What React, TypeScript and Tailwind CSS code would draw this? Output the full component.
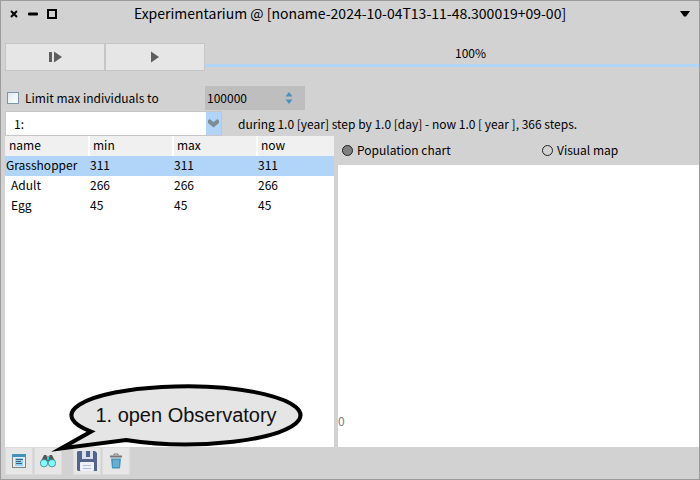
import { useState, type ReactNode } from "react";

const rows = [
  { name: "Grasshopper", min: 311, max: 311, now: 311, child: false },
  { name: "Adult", min: 266, max: 266, now: 266, child: true },
  { name: "Egg", min: 45, max: 45, now: 45, child: true },
];

function TitleBar() {
  return (
    <header className="flex h-[26px] items-center px-2 text-sm leading-5">
      <div className="flex flex-1 items-center gap-2">
        <button aria-label="Close" className="flex w-[10px] justify-center">
          <svg width="8" height="8" viewBox="0 0 8 8" stroke="#000" strokeWidth="2">
            <path d="M1 1l6 6M7 1l-6 6" />
          </svg>
        </button>
        <button aria-label="Minimize" className="flex w-[12px] justify-center">
          <svg width="10" height="4" viewBox="0 0 10 4">
            <rect x="0" y="0.5" width="10" height="3" rx="1" />
          </svg>
        </button>
        <button aria-label="Maximize">
          <svg width="10" height="10" viewBox="0 0 10 10" fill="none" stroke="#000" strokeWidth="2">
            <rect x="1" y="1" width="8" height="8" />
          </svg>
        </button>
      </div>
      <h1 className="pb-0.5 whitespace-nowrap">Experimentarium @ [noname-2024-10-04T13-11-48.300019+09-00]</h1>
      <div className="flex flex-1 justify-end">
        <button aria-label="Window menu" className="pr-px">
          <svg width="10" height="6" viewBox="0 0 10 6">
            <path d="M0 0h10L6 5.5H4z" />
          </svg>
        </button>
      </div>
    </header>
  );
}

function RunBar() {
  const button = "flex h-7 w-[100px] items-center justify-center border border-[#c6c6c6] bg-[#e6e6e6]";
  return (
    <div className="mt-4 flex pl-1">
      <button aria-label="Step" className={button}>
        <svg width="14" height="12" viewBox="0 0 14 12" fill="#5e5e5e">
          <rect x="1" y="1" width="3" height="10" />
          <path d="M6 0.5L14 6L6 11.5z" />
        </svg>
      </button>
      <button aria-label="Run" className={button}>
        <svg width="10" height="12" viewBox="0 0 10 12" fill="#5e5e5e">
          <path d="M1 0.5L9 6L1 11.5z" />
        </svg>
      </button>
      <div
        role="progressbar"
        aria-valuenow={100}
        aria-label="Progress"
        className="ml-px flex h-6 flex-1 items-start justify-center border-b-3 border-[#b0d5f9] pl-9"
      >
        100%
      </div>
    </div>
  );
}

function LimitRow() {
  const [limited, setLimited] = useState(false);
  return (
    <div className="mt-[15px] flex h-6 items-center pl-1">
      <label className="flex w-[200px] items-center gap-1.5 pl-0.5">
        <input
          type="checkbox"
          checked={limited}
          onChange={(e) => setLimited(e.target.checked)}
          className="size-3 appearance-none border border-[#7f93ad] bg-linear-to-br from-[#dfeaf2] to-white checked:bg-[#4a8fc0]"
        />
        Limit max individuals to
      </label>
      <div className="flex h-full w-[100px] items-center bg-[#bebebe] pr-3">
        <input aria-label="Max individuals" defaultValue="100000" className="w-0 flex-1 bg-transparent pl-0.5 outline-none" />
        <svg width="8" height="12" viewBox="0 0 8 12" fill="#4a8fbe">
          <path d="M4 0L7.5 4.5H0.5zM4 12L7.5 7.5H0.5z" />
        </svg>
      </div>
    </div>
  );
}

function PhaseRow() {
  return (
    <div className="mt-px flex h-[25px] items-center pl-1">
      <div className="relative h-full w-[217px]">
        <select
          aria-label="Phase"
          className="h-full w-full appearance-none border border-[#c6c6c6] bg-[linear-gradient(to_right,#fff_0,#fff_200px,#b0d5f9_200px)] pl-2 outline-none"
        >
          <option>1:</option>
        </select>
        <svg className="pointer-events-none absolute top-2 right-[3px]" width="11" height="9" viewBox="0 0 11 9" fill="#7f8b98">
          <path d="M0 1.5L1.5 0L5.5 3L9.5 0L11 1.5V4L5.5 8.5L0 4z" />
        </svg>
      </div>
      <p className="pl-4">during 1.0 [year] step by 1.0 [day] - now 1.0 [ year ], 366 steps.</p>
    </div>
  );
}

function PopulationTable() {
  const head = "border-r-2 border-white bg-[#f0f0f0] pl-[3px] text-left font-normal";
  return (
    <div className="w-[329px] bg-white">
      <table className="w-full table-fixed border-collapse leading-[18px]">
        <thead>
          <tr className="h-5 align-top">
            <th className="w-[84px] border-r-2 border-white bg-[#f0f0f0] pl-1 text-left font-normal">name</th>
            <th className={`w-[84px] ${head}`}>min</th>
            <th className={`w-[84px] ${head}`}>max</th>
            <th className="bg-[#f0f0f0] pl-[3px] text-left font-normal">now</th>
          </tr>
        </thead>
        <tbody>
          {rows.map((row) => (
            <tr key={row.name} className={row.child ? "h-5 align-top" : "h-5 bg-[#b0d5f9] align-top"}>
              <td className={row.child ? "pl-1.5" : "pl-px"}>{row.name}</td>
              <td className="pl-px">{row.min}</td>
              <td className="pl-px">{row.max}</td>
              <td className="pl-px">{row.now}</td>
            </tr>
          ))}
        </tbody>
      </table>
    </div>
  );
}

function ViewPanel() {
  const [view, setView] = useState("chart");
  const radio = "size-[11px] appearance-none rounded-full border border-[#222] checked:bg-[#808080]";
  return (
    <section className="flex flex-1 flex-col">
      <div className="flex h-[29px] items-center pb-px pl-1">
        <label className="flex w-[200px] items-center gap-1">
          <input type="radio" name="view" checked={view === "chart"} onChange={() => setView("chart")} className={radio} />
          Population chart
        </label>
        <label className="flex items-center gap-1">
          <input type="radio" name="view" checked={view === "map"} onChange={() => setView("map")} className={radio} />
          Visual map
        </label>
      </div>
      <div className="flex flex-1 items-end bg-white pb-4 text-[#808080]">0</div>
    </section>
  );
}

function ToolButton({ label, children }: { label: string; children: ReactNode }) {
  return (
    <button aria-label={label} className="flex size-7 items-center justify-center border border-[#dcdcdc] bg-[#e6e6e6]">
      {children}
    </button>
  );
}

function Balloon() {
  return (
    <div className="pointer-events-none absolute bottom-[21px] left-3 h-[72px] w-[258px]">
      <svg className="absolute inset-0" width="258" height="72" viewBox="46 382 258 72">
        <path
          d="M91 431.5A114.5 29 0 1 1 126 440L61 448.5Z"
          fill="#e5e5e5"
          stroke="#000"
          strokeWidth="4"
          strokeMiterlimit="12"
        />
      </svg>
      <p className="relative pt-[19px] pl-[22px] text-center font-['Liberation_Sans',Arial,sans-serif] text-xl leading-7 whitespace-nowrap text-[#111]">
        1. open Observatory
      </p>
    </div>
  );
}

function ToolBar() {
  return (
    <footer className="flex gap-px pb-1 pl-1">
      <ToolButton label="Inspect">
        <svg width="14" height="14" viewBox="0 0 14 14">
          <rect x="0.5" y="1" width="13" height="12.5" fill="#e9eaea" stroke="#7c8488" />
          <rect x="0" y="0" width="14" height="3" fill="#4292bd" />
          <rect x="3" y="4" width="8" height="8" fill="#8fd3fb" />
          <path d="M4 5.5h7M4 7.5h5M4 9.5h6" stroke="#46606f" />
        </svg>
      </ToolButton>
      <div className="relative">
        <ToolButton label="Open observatory">
          <svg width="16" height="14" viewBox="0 0 16 14">
            <path d="M4 1h2.5v1.5h3V1H12l3 6v3H9V7.5H7V10H1V7z" fill="#555" />
            <rect x="7" y="3" width="2" height="3" fill="#00e0e8" />
            <circle cx="4" cy="9.2" r="3.7" fill="#7ffcff" stroke="#3f7f85" strokeWidth="0.8" />
            <circle cx="12" cy="9.2" r="3.7" fill="#7ffcff" stroke="#3f7f85" strokeWidth="0.8" />
          </svg>
        </ToolButton>
        <Balloon />
      </div>
      <div className="w-[9px]" />
      <ToolButton label="Save">
        <svg className="shrink-0" width="22" height="22" viewBox="0 0 22 22">
          <path d="M2 1h17l2 2v18H2l-1-1V2z" fill="#52648a" />
          <rect x="6" y="1" width="11" height="8" fill="#d9dff0" />
          <rect x="10" y="1" width="4" height="6" fill="#52648a" />
          <rect x="4" y="12" width="14" height="9" rx="1" fill="#eef1fa" />
          <path d="M7 15.5h8M7 18.5h8" stroke="#b4bdd6" />
        </svg>
      </ToolButton>
      <ToolButton label="Delete">
        <svg width="12" height="16" viewBox="0 0 12 16">
          <path d="M4 2.5V1h4v1.5" fill="none" stroke="#777" />
          <rect x="0" y="2.5" width="12" height="2" fill="#777" />
          <path d="M1 5.5h10L10 15.5H2z" fill="#4596bf" />
          <path d="M4 7v7M6 7v7M8 7v7" stroke="#8cc4e0" />
        </svg>
      </ToolButton>
    </footer>
  );
}

export default function App() {
  return (
    <main className="flex min-h-screen flex-col border border-[#9c9c9c] bg-[#d2d2d2] font-['Noto_Sans_CJK_JP',sans-serif] text-xs leading-5 text-black">
      <TitleBar />
      <RunBar />
      <LimitRow />
      <PhaseRow />
      <div className="flex flex-1 gap-1 pl-1">
        <PopulationTable />
        <ViewPanel />
      </div>
      <ToolBar />
    </main>
  );
}
